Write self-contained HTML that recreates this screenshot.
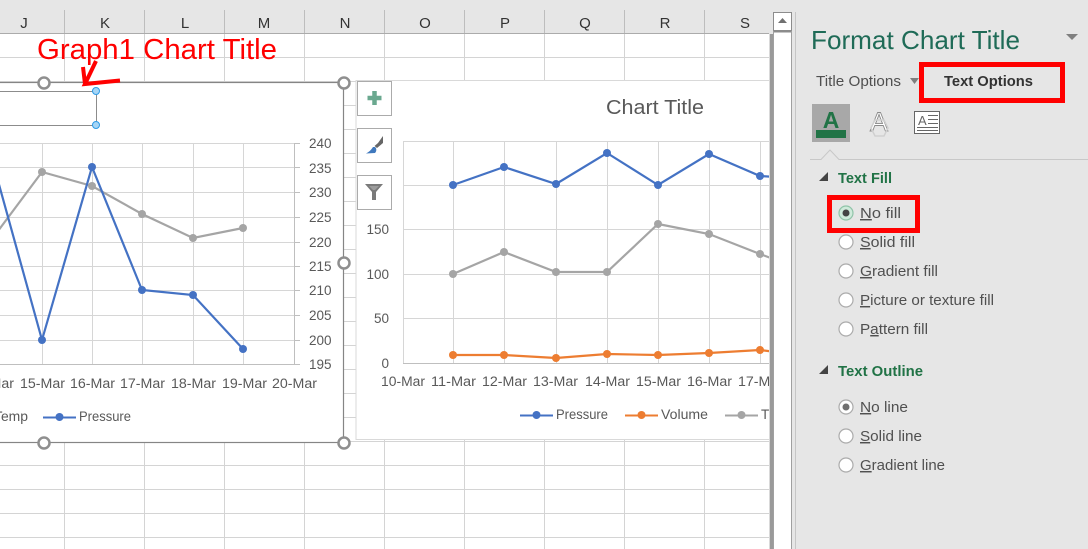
<!DOCTYPE html>
<html><head><meta charset="utf-8"><style>
html,body{margin:0;padding:0;background:#fff;overflow:hidden}
svg{display:block}
text{font-family:"Liberation Sans",sans-serif}
.h{font-size:15px;fill:#333;text-anchor:middle}
.a{font-size:13.5px;fill:#595959}
.p{font-size:14.5px;fill:#505050}
.g{font-size:14.5px;font-weight:bold;fill:#217346}
</style></head><body>
<svg width="1088" height="549" viewBox="0 0 1088 549" xmlns="http://www.w3.org/2000/svg">
<rect width="1088" height="549" fill="#fff"/>
<!-- header -->
<rect width="770" height="33" fill="#e6e6e6"/>
<path d="M0 33.500H770" stroke="#ababab" fill="none"/>
<path d="M64.500 10V33M144.500 10V33M224.500 10V33M304.500 10V33M384.500 10V33M464.500 10V33M544.500 10V33M624.500 10V33M704.500 10V33" stroke="#bdbdbd" fill="none"/>
<g class="h"><text class="h" x="24" y="28">J</text><text class="h" x="105" y="28">K</text><text class="h" x="185" y="28">L</text><text class="h" x="264" y="28">M</text><text class="h" x="345" y="28">N</text><text class="h" x="425" y="28">O</text><text class="h" x="505" y="28">P</text><text class="h" x="585" y="28">Q</text><text class="h" x="665" y="28">R</text><text class="h" x="745" y="28">S</text></g>
<!-- grid -->
<path d="M64.500 34V549M144.500 34V549M224.500 34V549M304.500 34V549M384.500 34V549M464.500 34V549M544.500 34V549M624.500 34V549M704.500 34V549M0 57.500H769M0 81.500H769M0 105.500H769M0 129.500H769M0 153.500H769M0 177.500H769M0 201.500H769M0 225.500H769M0 249.500H769M0 273.500H769M0 297.500H769M0 321.500H769M0 345.500H769M0 369.500H769M0 393.500H769M0 417.500H769M0 441.500H769M0 465.500H769M0 489.500H769M0 513.500H769M0 537.500H769" stroke="#d4d4d4" fill="none"/>
<!-- chart 2 -->
<rect x="356" y="80.500" width="420" height="359" fill="#fff" stroke="#d9d9d9"/>
<path d="M356 441.500H769" stroke="#d4d4d4"/>
<path d="M403.500 141V363M453.500 141V363M504.500 141V363M556.500 141V363M607.500 141V363M658.500 141V363M709.500 141V363M760.500 141V363M403 141.500H769M403 185.500H769M403 229.500H769M403 274.500H769M403 318.500H769" stroke="#d6d6d6" fill="none"/>
<path d="M403 363.500H769" stroke="#bfbfbf"/>
<text x="606" y="114" font-size="20" fill="#595959" textLength="98" lengthAdjust="spacingAndGlyphs">Chart Title</text>
<text class="a" x="389" y="234" text-anchor="end">150</text><text class="a" x="389" y="279" text-anchor="end">100</text><text class="a" x="389" y="323" text-anchor="end">50</text><text class="a" x="389" y="368" text-anchor="end">0</text>
<text class="a" x="381" y="386" textLength="44" lengthAdjust="spacingAndGlyphs">10-Mar</text>
<text class="a" x="431" y="386" textLength="45" lengthAdjust="spacingAndGlyphs">11-Mar</text>
<text class="a" x="482" y="386" textLength="45" lengthAdjust="spacingAndGlyphs">12-Mar</text>
<text class="a" x="533" y="386" textLength="45" lengthAdjust="spacingAndGlyphs">13-Mar</text>
<text class="a" x="585" y="386" textLength="45" lengthAdjust="spacingAndGlyphs">14-Mar</text>
<text class="a" x="636" y="386" textLength="45" lengthAdjust="spacingAndGlyphs">15-Mar</text>
<text class="a" x="687" y="386" textLength="45" lengthAdjust="spacingAndGlyphs">16-Mar</text>
<text class="a" x="738" y="386" textLength="45" lengthAdjust="spacingAndGlyphs">17-Mar</text>
<g fill="none" stroke-width="2.200">
<path d="M453 185L504 167L556 184L607 153L658 185L709 154L760 176L776 177" stroke="#4472c4"/>
<path d="M453 274L504 252L556 272L607 272L658 224L709 234L760 254L776 260" stroke="#a5a5a5"/>
<path d="M453 355L504 355L556 358L607 354L658 355L709 353L760 350L776 352" stroke="#ed7d31"/>
</g>
<g fill="#4472c4"><circle cx="453" cy="185" r="4"/><circle cx="504" cy="167" r="4"/><circle cx="556" cy="184" r="4"/><circle cx="607" cy="153" r="4"/><circle cx="658" cy="185" r="4"/><circle cx="709" cy="154" r="4"/><circle cx="760" cy="176" r="4"/></g>
<g fill="#a5a5a5"><circle cx="453" cy="274" r="4"/><circle cx="504" cy="252" r="4"/><circle cx="556" cy="272" r="4"/><circle cx="607" cy="272" r="4"/><circle cx="658" cy="224" r="4"/><circle cx="709" cy="234" r="4"/><circle cx="760" cy="254" r="4"/></g>
<g fill="#ed7d31"><circle cx="453" cy="355" r="4"/><circle cx="504" cy="355" r="4"/><circle cx="556" cy="358" r="4"/><circle cx="607" cy="354" r="4"/><circle cx="658" cy="355" r="4"/><circle cx="709" cy="353" r="4"/><circle cx="760" cy="350" r="4"/></g>
<!-- legend 2 -->
<path d="M520 415.500H553" stroke="#4472c4" stroke-width="2"/><circle cx="536.500" cy="415" r="4" fill="#4472c4"/>
<text class="a" x="556" y="419" textLength="52" lengthAdjust="spacingAndGlyphs">Pressure</text>
<path d="M625 415.500H658" stroke="#ed7d31" stroke-width="2"/><circle cx="641.500" cy="415" r="4" fill="#ed7d31"/>
<text class="a" x="661" y="419" textLength="47" lengthAdjust="spacingAndGlyphs">Volume</text>
<path d="M725 415.500H758" stroke="#a5a5a5" stroke-width="2"/><circle cx="741.500" cy="415" r="4" fill="#a5a5a5"/>
<text class="a" x="761" y="419">T</text>
<!-- chart 1 -->
<rect x="-2" y="82.500" width="345.500" height="360" fill="#fff" stroke="#858585" stroke-width="1.200"/>
<path d="M42.500 143V364M92.500 143V364M142.500 143V364M193.500 143V364M243.500 143V364M0 143.500H295M0 167.500H295M0 192.500H295M0 217.500H295M0 242.500H295M0 266.500H295M0 290.500H295M0 315.500H295M0 340.500H295" stroke="#d6d6d6" fill="none"/>
<path d="M294.500 143V364M0 364.500H295M295 143.500H300M295 167.500H300M295 192.500H300M295 217.500H300M295 242.500H300M295 266.500H300M295 290.500H300M295 315.500H300M295 340.500H300M295 364.500H300" stroke="#bfbfbf" fill="none"/>
<text class="a" x="309" y="148">240</text><text class="a" x="309" y="173">235</text><text class="a" x="309" y="197">230</text><text class="a" x="309" y="222">225</text><text class="a" x="309" y="247">220</text><text class="a" x="309" y="271">215</text><text class="a" x="309" y="295">210</text><text class="a" x="309" y="320">205</text><text class="a" x="309" y="345">200</text><text class="a" x="309" y="369">195</text>
<text class="a" x="-31" y="388" textLength="45" lengthAdjust="spacingAndGlyphs">14-Mar</text>
<text class="a" x="20" y="388" textLength="45" lengthAdjust="spacingAndGlyphs">15-Mar</text>
<text class="a" x="70" y="388" textLength="45" lengthAdjust="spacingAndGlyphs">16-Mar</text>
<text class="a" x="120" y="388" textLength="45" lengthAdjust="spacingAndGlyphs">17-Mar</text>
<text class="a" x="171" y="388" textLength="45" lengthAdjust="spacingAndGlyphs">18-Mar</text>
<text class="a" x="222" y="388" textLength="45" lengthAdjust="spacingAndGlyphs">19-Mar</text>
<text class="a" x="272" y="388" textLength="45" lengthAdjust="spacingAndGlyphs">20-Mar</text>
<g fill="none" stroke-width="2.200">
<path d="M-5 235L42 172L92 186L142 214L193 238L243 228" stroke="#a5a5a5"/>
<path d="M-5 170L42 340L92 167L142 290L193 295L243 349" stroke="#4472c4"/>
</g>
<g fill="#a5a5a5"><circle cx="42" cy="172" r="4"/><circle cx="92" cy="186" r="4"/><circle cx="142" cy="214" r="4"/><circle cx="193" cy="238" r="4"/><circle cx="243" cy="228" r="4"/></g>
<g fill="#4472c4"><circle cx="42" cy="340" r="4"/><circle cx="92" cy="167" r="4"/><circle cx="142" cy="290" r="4"/><circle cx="193" cy="295" r="4"/><circle cx="243" cy="349" r="4"/></g>
<text class="a" x="-6" y="421" textLength="34" lengthAdjust="spacingAndGlyphs">Temp</text>
<path d="M43 417.500H76" stroke="#4472c4" stroke-width="2"/><circle cx="59.500" cy="417" r="4" fill="#4472c4"/>
<text class="a" x="79" y="421" textLength="52" lengthAdjust="spacingAndGlyphs">Pressure</text>
<!-- title box -->
<path d="M0 91.500H96.500V125.500H0" fill="none" stroke="#8c8c8c"/>
<circle cx="96" cy="91" r="3.500" fill="#a6d5f5" stroke="#2e9be6"/>
<circle cx="96" cy="125" r="3.500" fill="#a6d5f5" stroke="#2e9be6"/>
<!-- handles -->
<g fill="#fff" stroke="#8f8f8f" stroke-width="2.500">
<circle cx="44" cy="83" r="5.500"/><circle cx="344" cy="83" r="5.500"/><circle cx="344" cy="263" r="5.500"/><circle cx="44" cy="443" r="5.500"/><circle cx="344" cy="443" r="5.500"/>
</g>
<!-- side buttons -->
<g fill="#fff" stroke="#ababab"><rect x="357.500" y="81.500" width="34" height="34"/><rect x="357.500" y="128.500" width="34" height="34"/><rect x="357.500" y="175.500" width="34" height="34"/></g>
<path d="M374.500 91V105M367.500 98H381.500" stroke="#6aa88f" stroke-width="4.500" fill="none"/>
<path d="M374.500 146L378 143L383 136V143L377 148Z" fill="#666"/>
<path d="M373 147C371 150 369 152 366 153.500L375 153C377 151 376.500 148 375 147Z" fill="#3f78bd"/>
<path d="M365 184H383L376 192V200H372V192Z" fill="#7a7a7a"/><path d="M369 186H379L375 190H373Z" fill="#9c9c9c"/>
<!-- annotation -->
<text x="37" y="59" font-size="29" fill="#ff0000" textLength="240" lengthAdjust="spacingAndGlyphs">Graph1 Chart Title</text>
<path d="M96 61L85 84L120 80.500M83 67L85 84" fill="none" stroke="#ff0000" stroke-width="4" stroke-linejoin="miter"/>
<!-- scrollbar -->
<rect x="769" y="0" width="319" height="549" fill="#e6e6e6"/>
<path d="M769.500 34V549" stroke="#d9d9d9"/>
<path d="M771.500 34V549" stroke="#9a9a9a" stroke-width="3"/>
<rect x="773.500" y="12.500" width="18" height="18" fill="#fff" stroke="#8c8c8c"/>
<rect x="773" y="31" width="19" height="518" fill="#fff"/>
<path d="M773 31.500H792" stroke="#8c8c8c" stroke-width="2"/>
<path d="M773.500 31V549M791.500 31V549" stroke="#a0a0a0" fill="none"/>
<path d="M778 23L782.500 18L787 23Z" fill="#707070"/>
<path d="M795.500 12V549" stroke="#c6c6c6"/>
<!-- pane -->
<text x="811" y="49" font-size="26" fill="#1f6b57" textLength="209" lengthAdjust="spacingAndGlyphs">Format Chart Title</text>
<path d="M1066 34H1078L1072 40Z" fill="#7f7f7f"/>
<text class="p" x="816" y="86" textLength="85" lengthAdjust="spacingAndGlyphs">Title Options</text>
<path d="M910 78H919L914.500 84Z" fill="#7f7f7f"/>
<rect x="921.500" y="64.500" width="141" height="36" fill="none" stroke="#ff0000" stroke-width="5"/>
<text x="944" y="86" font-size="14.500" font-weight="bold" fill="#333" textLength="89" lengthAdjust="spacingAndGlyphs">Text Options</text>
<rect x="812" y="104" width="38" height="38" fill="#a8a8a8"/>
<text x="831" y="128" font-size="23" text-anchor="middle" font-weight="bold" fill="#217346">A</text>
<rect x="816" y="130" width="30" height="8" fill="#217346"/>
<text x="879" y="131" font-size="27" text-anchor="middle" fill="#fff" stroke="#8a8a8a" stroke-width=".9">A</text>
<path d="M871 128L875 120H884L888 128L884 136H875Z" fill="none" stroke="#d0d0d0" stroke-width="1.500"/>
<rect x="914.500" y="111.500" width="25" height="22" fill="#fff" stroke="#666"/>
<text x="918" y="125" font-size="13" fill="#666">A</text>
<path d="M928 115.500H938M928 119.500H938M928 123.500H938M917 127.500H938M917 130.500H938" stroke="#666" fill="none"/>
<path d="M810 159.500H821L830 150L839 159.500H1088" fill="none" stroke="#c8c8c8"/>
<path d="M819 181H828V172Z" fill="#444"/>
<text class="g" x="838" y="183" textLength="54" lengthAdjust="spacingAndGlyphs">Text Fill</text>
<rect x="829.500" y="197.500" width="88" height="33" fill="none" stroke="#ff0000" stroke-width="5"/>
<g fill="#fff" stroke="#ababab" stroke-width="1.200">
<circle cx="846" cy="213" r="7" fill="#cfeadb" stroke="#8fc4a8"/>
<circle cx="846" cy="242" r="7"/><circle cx="846" cy="271" r="7"/><circle cx="846" cy="300" r="7"/><circle cx="846" cy="329" r="7"/>
<circle cx="846" cy="407" r="7"/><circle cx="846" cy="436" r="7"/><circle cx="846" cy="465" r="7"/>
</g>
<circle cx="846" cy="213" r="3.500" fill="#444"/>
<circle cx="846" cy="407" r="3.500" fill="#707070"/>
<text class="p" x="860" y="218" textLength="41" lengthAdjust="spacingAndGlyphs"><tspan text-decoration="underline">N</tspan>o fill</text>
<text class="p" x="860" y="247" textLength="55" lengthAdjust="spacingAndGlyphs"><tspan text-decoration="underline">S</tspan>olid fill</text>
<text class="p" x="860" y="276" textLength="78" lengthAdjust="spacingAndGlyphs"><tspan text-decoration="underline">G</tspan>radient fill</text>
<text class="p" x="860" y="305" textLength="134" lengthAdjust="spacingAndGlyphs"><tspan text-decoration="underline">P</tspan>icture or texture fill</text>
<text class="p" x="860" y="334" textLength="68" lengthAdjust="spacingAndGlyphs">P<tspan text-decoration="underline">a</tspan>ttern fill</text>
<path d="M819 374H828V365Z" fill="#444"/>
<text class="g" x="838" y="376" textLength="85" lengthAdjust="spacingAndGlyphs">Text Outline</text>
<text class="p" x="860" y="412" textLength="48" lengthAdjust="spacingAndGlyphs"><tspan text-decoration="underline">N</tspan>o line</text>
<text class="p" x="860" y="441" textLength="62" lengthAdjust="spacingAndGlyphs"><tspan text-decoration="underline">S</tspan>olid line</text>
<text class="p" x="860" y="470" textLength="85" lengthAdjust="spacingAndGlyphs"><tspan text-decoration="underline">G</tspan>radient line</text>
</svg>
</body></html>
